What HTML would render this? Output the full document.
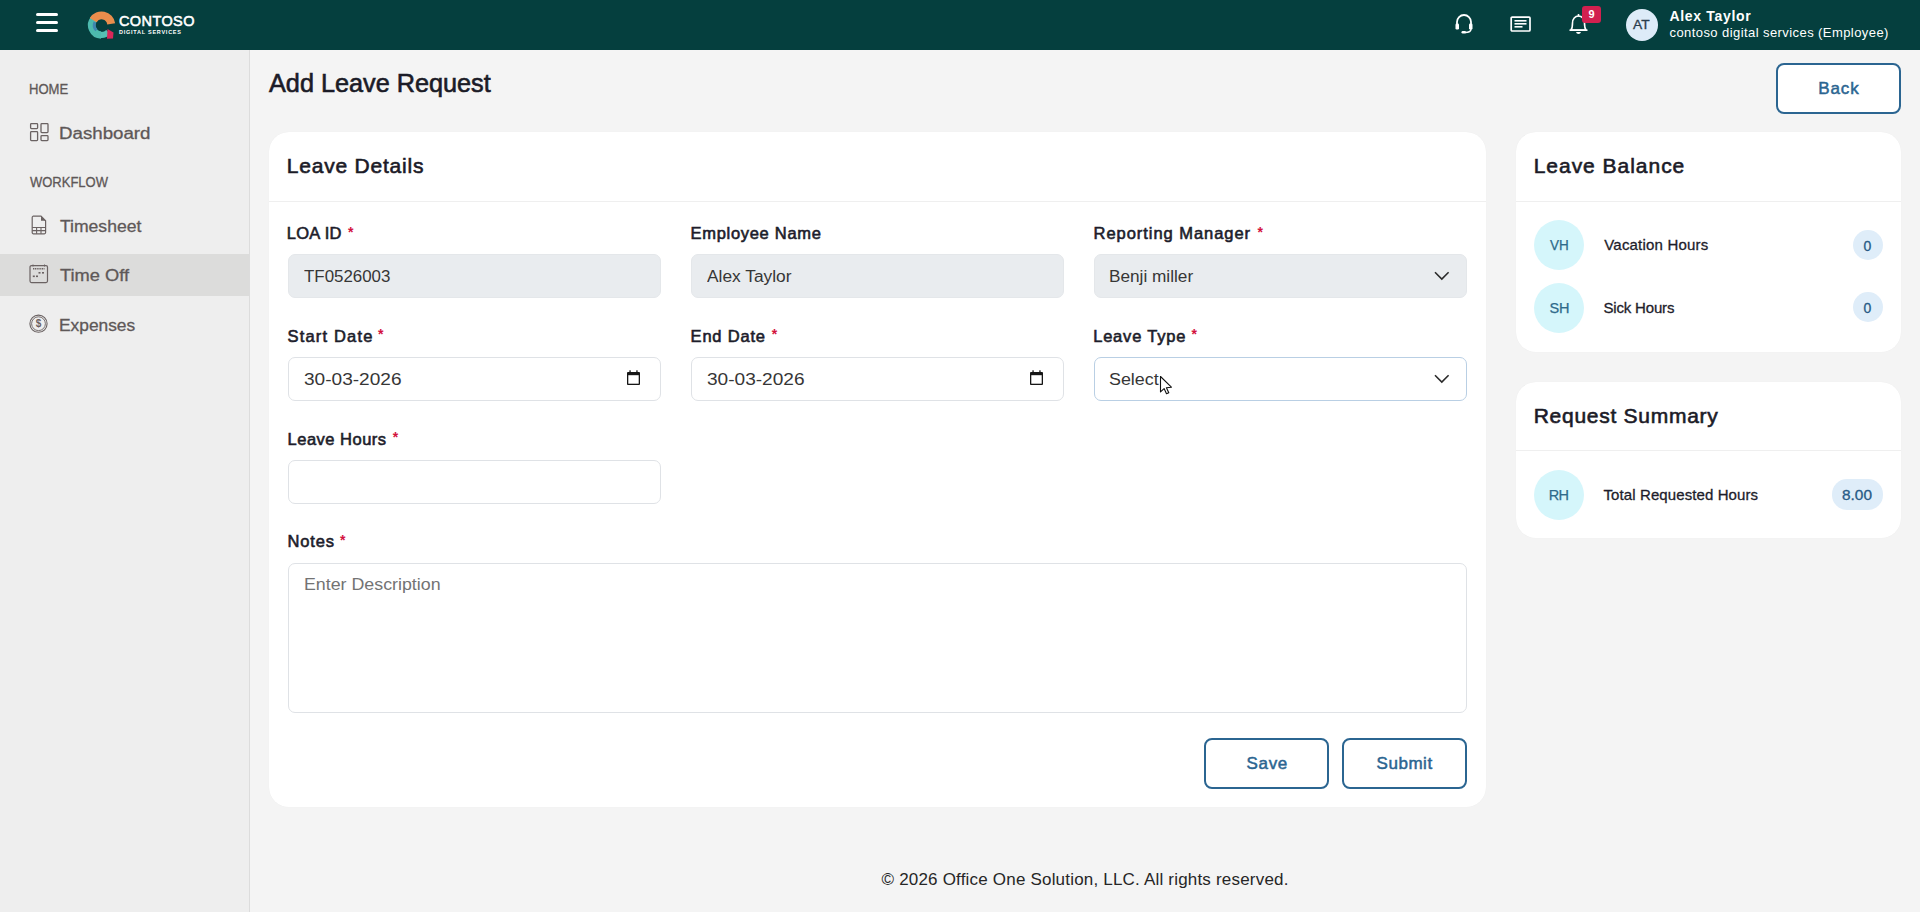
<!DOCTYPE html>
<html>
<head>
<meta charset="utf-8">
<style>
*{box-sizing:border-box;margin:0;padding:0}
html,body{width:1920px;height:912px;overflow:hidden;background:#f4f4f4;font-family:"Liberation Sans",sans-serif;position:relative}
.abs{position:absolute}
.t{position:absolute;white-space:nowrap;line-height:1;z-index:5}
#hdr{position:absolute;left:0;top:0;width:1920px;height:50px;background:#053f3e}
#side{position:absolute;left:0;top:50px;width:250px;height:862px;background:#eeeeee;border-right:1px solid #dcdcdc}
.card{position:absolute;background:#fff;border-radius:20px;box-shadow:0 0 1px rgba(0,0,0,0.06)}
.sep{position:absolute;left:0;right:0;height:1px;background:#efefef}
.inp{position:absolute;height:44px;width:373px;border:1px solid #dfe2e6;border-radius:7px;background:#fff}
.inp.dis{background:#e9ecef;border-color:#e4e7ea}
.btn{position:absolute;width:125px;height:51px;border:2px solid #2b6591;border-radius:8px;background:#fff}
.av{position:absolute;width:50px;height:50px;border-radius:50%;background:#d5f6fb}
.bdg{position:absolute;height:30px;border-radius:15px;background:#dfedf9}
.req{position:absolute;font-size:14px;font-weight:bold;color:#d3123e;line-height:1;z-index:5}
</style>
</head>
<body>
<!-- HEADER -->
<div id="hdr">
  <div class="abs" style="left:36px;top:13px;width:22px;height:3px;background:#fff;border-radius:2px"></div>
  <div class="abs" style="left:36px;top:21px;width:22px;height:3px;background:#fff;border-radius:2px"></div>
  <div class="abs" style="left:36px;top:29px;width:22px;height:3px;background:#fff;border-radius:2px"></div>
  <svg class="abs" style="left:87px;top:8px" width="30" height="33" viewBox="0 0 30 33">
    <path d="M14.16 26.99 A9.8 9.8 0 0 1 7.22 10.64" fill="none" stroke="#4dbaae" stroke-width="7.5"/>
    <path d="M9.41 22.29 A7.2 7.2 0 0 1 7.97 14.16" fill="none" stroke="#3f86b0" stroke-width="3"/>
    <path d="M6.19 12.01 A9.8 9.8 0 0 1 24.20 15.84" fill="none" stroke="#ea8d4c" stroke-width="8"/>
    <path d="M21.43 24.13 A9.8 9.8 0 0 1 13.65 26.96" fill="none" stroke="#56c0b4" stroke-width="6"/>
    <path d="M20.5 21 L26.5 24.5 L26 30.5 L20 30.8 Z" fill="#d8285a"/>
  </svg>
  <svg class="abs" style="left:1454px;top:13px" width="20" height="21" viewBox="0 0 20 21">
    <path d="M3 12 V9 A7 7 0 0 1 17 9 V12" fill="none" stroke="#fff" stroke-width="1.8"/>
    <rect x="1.5" y="10.5" width="3.5" height="6" rx="1.2" fill="#fff"/>
    <rect x="15" y="10.5" width="3.5" height="6" rx="1.2" fill="#fff"/>
    <path d="M17 16 C17 18.5 14 19.5 11 19.5" fill="none" stroke="#fff" stroke-width="1.5"/>
    <rect x="7.5" y="18" width="4.5" height="2.5" rx="1.2" fill="#fff"/>
  </svg>
  <svg class="abs" style="left:1510px;top:15px" width="22" height="18" viewBox="0 0 22 18">
    <rect x="1.2" y="2.1" width="18.8" height="13.9" rx="1" fill="none" stroke="#fff" stroke-width="1.7"/>
    <rect x="4.5" y="5" width="12" height="1.6" fill="#fff"/>
    <rect x="4.5" y="8" width="12" height="1.6" fill="#fff"/>
    <rect x="4.5" y="11" width="8" height="1.6" fill="#fff"/>
  </svg>
  <svg class="abs" style="left:1568px;top:13px" width="21" height="22" viewBox="0 0 21 22">
    <path d="M3 17 C4.5 15 4.5 13 4.5 10 C4.5 6 7 3 10.5 3 C14 3 16.5 6 16.5 10 C16.5 13 16.5 15 18 17 Z" fill="none" stroke="#fff" stroke-width="1.6" stroke-linejoin="round"/>
    <path d="M1.5 17.2 H19.5" stroke="#fff" stroke-width="1.6"/>
    <path d="M8 19 A2.6 2.6 0 0 0 13 19 Z" fill="#fff"/>
    <rect x="9.7" y="1" width="1.6" height="2.5" fill="#fff"/>
  </svg>
  <div class="abs" style="left:1582px;top:6px;width:19px;height:17px;background:#d1204f;border-radius:3px;color:#fff;font-size:11px;font-weight:bold;text-align:center;line-height:17px">9</div>
  <div class="abs" style="left:1625.5px;top:9px;width:32px;height:32px;border-radius:50%;background:#ddebf8"></div>
</div>

<!-- SIDEBAR -->
<div id="side">
  <svg class="abs" style="left:29px;top:72px" width="20" height="20" viewBox="0 0 20 20">
    <rect x="1.6" y="1.6" width="7" height="5" rx="0.8" fill="none" stroke="#6a6262" stroke-width="1.3"/>
    <rect x="1.6" y="9.6" width="7" height="9" rx="0.8" fill="none" stroke="#6a6262" stroke-width="1.3"/>
    <rect x="12" y="1.6" width="7" height="9" rx="0.8" fill="none" stroke="#6a6262" stroke-width="1.3"/>
    <rect x="12" y="13.6" width="7" height="5" rx="0.8" fill="none" stroke="#6a6262" stroke-width="1.3"/>
  </svg>
  <svg class="abs" style="left:31px;top:165px" width="16" height="20" viewBox="0 0 16 20">
    <path d="M2 1.2 H10 L14.6 5.8 V17.6 A1.2 1.2 0 0 1 13.4 18.8 H2.4 A1.2 1.2 0 0 1 1.2 17.6 V2.4 A1.2 1.2 0 0 1 2 1.2 Z" fill="none" stroke="#6a6262" stroke-width="1.2"/>
    <path d="M10 1.2 V5.8 H14.6" fill="#6a6262"/>
    <path d="M1.2 12.5 H14.6 M1.2 15.6 H14.6 M5.6 12.5 V18.8 M10 12.5 V18.8" stroke="#6a6262" stroke-width="1.1"/>
  </svg>
  <div class="abs" style="left:0;top:204px;width:249px;height:42px;background:#dcdcdb"></div>
  <svg class="abs" style="left:29px;top:214px" width="20" height="20" viewBox="0 0 20 20">
    <rect x="1" y="1.6" width="17.5" height="17" rx="1.5" fill="none" stroke="#6a6262" stroke-width="1.2"/>
    <path d="M4 4.8 H15.5" stroke="#6a6262" stroke-width="1.4" stroke-dasharray="1.2 0.6"/>
    <path d="M4 0.5 V2.5 M15.5 0.5 V2.5" stroke="#6a6262" stroke-width="1"/>
    <rect x="9.5" y="8" width="2" height="1.6" fill="#6a6262"/>
    <rect x="13" y="8" width="2" height="1.6" fill="#6a6262"/>
    <rect x="3.8" y="11.5" width="2" height="1.6" fill="#6a6262"/>
    <rect x="7" y="11.5" width="2" height="1.6" fill="#6a6262"/>
  </svg>
  <svg class="abs" style="left:29px;top:264px" width="20" height="20" viewBox="0 0 20 20">
    <circle cx="9.5" cy="9.7" r="8.6" fill="none" stroke="#6a6262" stroke-width="1.1"/>
    <circle cx="9.5" cy="9.7" r="6.9" fill="none" stroke="#6a6262" stroke-width="0.9"/>
    <text x="9.5" y="13.3" font-size="10" font-family="Liberation Sans" font-weight="bold" fill="#6a6262" text-anchor="middle">$</text>
  </svg>
</div>

<!-- MAIN -->
<div class="btn" style="left:1776px;top:63px"></div>

<div class="card" style="left:269px;top:132px;width:1217px;height:675px">
  <div class="sep" style="top:69px"></div>
</div>
<div class="card" style="left:1516px;top:132px;width:385px;height:220px">
  <div class="sep" style="top:69px"></div>
</div>
<div class="card" style="left:1516px;top:382px;width:385px;height:156px">
  <div class="sep" style="top:68px"></div>
</div>

<!-- FORM -->
<div class="inp dis" style="left:288px;top:254px"></div>
<div class="inp dis" style="left:691px;top:254px"></div>
<div class="inp dis" style="left:1094px;top:254px">
  <svg class="abs" style="left:338.5px;top:16px" width="16" height="10" viewBox="0 0 16 10"><path d="M1 1.2 L7.8 8 L14.6 1.2" fill="none" stroke="#2b2b2b" stroke-width="1.6"/></svg>
</div>
<div class="inp" style="left:288px;top:357px">
  <svg class="abs" style="left:338px;top:12px" width="14" height="16" viewBox="0 0 14 16"><rect x="0" y="2" width="13" height="13" rx="0.9" fill="#151515"/><rect x="1.3" y="5.2" width="10.4" height="8.5" fill="#fff"/><rect x="2.4" y="0.3" width="1.3" height="2.5" fill="#151515"/><rect x="9.3" y="0.3" width="1.3" height="2.5" fill="#151515"/></svg>
</div>
<div class="inp" style="left:691px;top:357px">
  <svg class="abs" style="left:338px;top:12px" width="14" height="16" viewBox="0 0 14 16"><rect x="0" y="2" width="13" height="13" rx="0.9" fill="#151515"/><rect x="1.3" y="5.2" width="10.4" height="8.5" fill="#fff"/><rect x="2.4" y="0.3" width="1.3" height="2.5" fill="#151515"/><rect x="9.3" y="0.3" width="1.3" height="2.5" fill="#151515"/></svg>
</div>
<div class="inp" style="left:1094px;top:357px;border-color:#b9cfe4">
  <svg class="abs" style="left:338.5px;top:16px" width="16" height="10" viewBox="0 0 16 10"><path d="M1 1.2 L7.8 8 L14.6 1.2" fill="none" stroke="#2b2b2b" stroke-width="1.6"/></svg>
</div>
<div class="inp" style="left:288px;top:460px"></div>
<div class="inp" style="left:288px;top:563px;width:1179px;height:150px"></div>

<div class="btn" style="left:1204px;top:738px"></div>
<div class="btn" style="left:1342px;top:738px"></div>

<div class="req" style="left:348px;top:224.5px">*</div>
<div class="req" style="left:1257.4px;top:224.5px">*</div>
<div class="req" style="left:378px;top:327.2px">*</div>
<div class="req" style="left:771.7px;top:327.2px">*</div>
<div class="req" style="left:1191.4px;top:327.2px">*</div>
<div class="req" style="left:392.8px;top:429.8px">*</div>
<div class="req" style="left:340px;top:533px">*</div>

<div class="av" style="left:1534px;top:220px"></div>
<div class="bdg" style="left:1853px;top:230px;width:30px"></div>
<div class="av" style="left:1534px;top:283px"></div>
<div class="bdg" style="left:1853px;top:292px;width:30px"></div>
<div class="av" style="left:1534px;top:470px"></div>
<div class="bdg" style="left:1832px;top:479px;width:51px;height:31px"></div>

<div class="t" id="addleave" style="left:268.50px;top:70.96px;font-size:25px;font-weight:normal;color:#1b1b27;letter-spacing:0.000px;-webkit-text-stroke:0.6px #1b1b27;transform:scaleX(1.0098);transform-origin:0 0">Add Leave Request</div>
<div class="t" id="ldetails" style="left:286.70px;top:154.83px;font-size:21px;font-weight:normal;color:#1b1b27;letter-spacing:0.800px;-webkit-text-stroke:0.6px #1b1b27">Leave Details</div>
<div class="t" id="lbal" style="left:1533.70px;top:155.35px;font-size:21px;font-weight:normal;color:#1b1b27;letter-spacing:0.973px;-webkit-text-stroke:0.6px #1b1b27">Leave Balance</div>
<div class="t" id="rsum" style="left:1533.70px;top:404.67px;font-size:21px;font-weight:normal;color:#1b1b27;letter-spacing:0.731px;-webkit-text-stroke:0.6px #1b1b27">Request Summary</div>
<div class="t" id="l_loa" style="left:286.70px;top:224.58px;font-size:16.5px;font-weight:normal;color:#1d1d2b;letter-spacing:0.320px;-webkit-text-stroke:0.6px #1d1d2b">LOA ID</div>
<div class="t" id="l_emp" style="left:690.58px;top:224.88px;font-size:16.5px;font-weight:normal;color:#1d1d2b;letter-spacing:0.693px;-webkit-text-stroke:0.6px #1d1d2b">Employee Name</div>
<div class="t" id="l_rep" style="left:1093.62px;top:224.68px;font-size:16.5px;font-weight:normal;color:#1d1d2b;letter-spacing:0.950px;-webkit-text-stroke:0.6px #1d1d2b">Reporting Manager</div>
<div class="t" id="l_start" style="left:287.54px;top:328.36px;font-size:16.5px;font-weight:normal;color:#1d1d2b;letter-spacing:1.173px;-webkit-text-stroke:0.6px #1d1d2b">Start Date</div>
<div class="t" id="l_end" style="left:690.58px;top:328.22px;font-size:16.5px;font-weight:normal;color:#1d1d2b;letter-spacing:0.800px;-webkit-text-stroke:0.6px #1d1d2b">End Date</div>
<div class="t" id="l_type" style="left:1093.16px;top:328.20px;font-size:16.5px;font-weight:normal;color:#1d1d2b;letter-spacing:0.800px;-webkit-text-stroke:0.6px #1d1d2b">Leave Type</div>
<div class="t" id="l_hours" style="left:287.54px;top:430.98px;font-size:16.5px;font-weight:normal;color:#1d1d2b;letter-spacing:0.496px;-webkit-text-stroke:0.6px #1d1d2b">Leave Hours</div>
<div class="t" id="l_notes" style="left:287.62px;top:533.46px;font-size:16.5px;font-weight:normal;color:#1d1d2b;letter-spacing:0.800px;-webkit-text-stroke:0.6px #1d1d2b">Notes</div>
<div class="t" id="i_tf" style="left:303.50px;top:268.66px;font-size:16px;font-weight:normal;color:#363636;letter-spacing:0.000px;transform:scaleX(1.0556);transform-origin:0 0">TF0526003</div>
<div class="t" id="i_alex" style="left:707.38px;top:268.82px;font-size:16px;font-weight:normal;color:#363636;letter-spacing:0.000px;transform:scaleX(1.0832);transform-origin:0 0">Alex Taylor</div>
<div class="t" id="i_benji" style="left:1109.20px;top:268.94px;font-size:16px;font-weight:normal;color:#363636;letter-spacing:0.000px;transform:scaleX(1.0749);transform-origin:0 0">Benji miller</div>
<div class="t" id="i_d1" style="left:303.58px;top:372.24px;font-size:16px;font-weight:normal;color:#363636;letter-spacing:0.000px;transform:scaleX(1.1915);transform-origin:0 0">30-03-2026</div>
<div class="t" id="i_d2" style="left:706.58px;top:372.24px;font-size:16px;font-weight:normal;color:#363636;letter-spacing:0.000px;transform:scaleX(1.1915);transform-origin:0 0">30-03-2026</div>
<div class="t" id="i_sel" style="left:1109.16px;top:371.98px;font-size:16px;font-weight:normal;color:#363636;letter-spacing:0.000px;transform:scaleX(1.1174);transform-origin:0 0">Select</div>
<div class="t" id="i_desc" style="left:303.58px;top:576.90px;font-size:16px;font-weight:normal;color:#737373;letter-spacing:0.000px;transform:scaleX(1.1125);transform-origin:0 0">Enter Description</div>
<div class="t" id="b_save" style="left:1246.58px;top:755.27px;font-size:17px;font-weight:normal;color:#2b6591;letter-spacing:0.640px;-webkit-text-stroke:0.5px #2b6591">Save</div>
<div class="t" id="b_sub" style="left:1376.54px;top:755.27px;font-size:17px;font-weight:normal;color:#2b6591;letter-spacing:0.544px;-webkit-text-stroke:0.5px #2b6591">Submit</div>
<div class="t" id="b_back" style="left:1818.24px;top:80.27px;font-size:17px;font-weight:normal;color:#2b6591;letter-spacing:0.907px;-webkit-text-stroke:0.5px #2b6591">Back</div>
<div class="t" id="r_vac" style="left:1604.30px;top:236.62px;font-size:15px;font-weight:normal;color:#1d1d2b;letter-spacing:0.185px;-webkit-text-stroke:0.3px #1d1d2b">Vacation Hours</div>
<div class="t" id="r_sick" style="left:1603.50px;top:299.74px;font-size:15px;font-weight:normal;color:#1d1d2b;letter-spacing:-0.178px;-webkit-text-stroke:0.3px #1d1d2b">Sick Hours</div>
<div class="t" id="r_tot" style="left:1603.52px;top:487.30px;font-size:15px;font-weight:normal;color:#1d1d2b;letter-spacing:0.100px;-webkit-text-stroke:0.3px #1d1d2b">Total Requested Hours</div>
<div class="t" id="a_vh" style="left:1550.30px;top:238.30px;font-size:14.5px;font-weight:normal;color:#2f6b8b;letter-spacing:0.000px;-webkit-text-stroke:0.25px #2f6b8b;transform:scaleX(0.9300);transform-origin:0 0">VH</div>
<div class="t" id="a_sh" style="left:1549.60px;top:300.90px;font-size:14.5px;font-weight:normal;color:#2f6b8b;letter-spacing:-0.320px;-webkit-text-stroke:0.25px #2f6b8b">SH</div>
<div class="t" id="a_rh" style="left:1548.70px;top:488.18px;font-size:14.5px;font-weight:normal;color:#2f6b8b;letter-spacing:-0.720px;-webkit-text-stroke:0.25px #2f6b8b">RH</div>
<div class="t" id="g_0a" style="left:1863.40px;top:238.74px;font-size:14px;font-weight:normal;color:#285b86;letter-spacing:0.000px;-webkit-text-stroke:0.3px #285b86">0</div>
<div class="t" id="g_0b" style="left:1863.40px;top:300.58px;font-size:14px;font-weight:normal;color:#285b86;letter-spacing:0.000px;-webkit-text-stroke:0.3px #285b86">0</div>
<div class="t" id="g_8" style="left:1841.50px;top:487.74px;font-size:14px;font-weight:normal;color:#285b86;letter-spacing:0.000px;-webkit-text-stroke:0.3px #285b86;transform:scaleX(1.1000);transform-origin:0 0">8.00</div>
<div class="t" id="h_name" style="left:1669.50px;top:8.70px;font-size:14px;font-weight:bold;color:#ffffff;letter-spacing:0.672px">Alex Taylor</div>
<div class="t" id="h_sub" style="left:1669.50px;top:25.62px;font-size:13px;font-weight:normal;color:#ffffff;letter-spacing:0.424px">contoso digital services (Employee)</div>
<div class="t" id="h_cont" style="left:119.00px;top:14.46px;font-size:14.5px;font-weight:normal;color:#ffffff;letter-spacing:0.400px;-webkit-text-stroke:0.55px #ffffff">CONTOSO</div>
<div class="t" id="h_dig" style="left:119.00px;top:29.97px;font-size:5.5px;font-weight:bold;color:#ffffff;letter-spacing:0.747px">DIGITAL SERVICES</div>
<div class="t" id="h_at" style="left:1633.30px;top:17.74px;font-size:13px;font-weight:normal;color:#2a3d4d;letter-spacing:0.000px;-webkit-text-stroke:0.3px #2a3d4d;transform:scaleX(1.0599);transform-origin:0 0">AT</div>
<div class="t" id="s_home" style="left:29.26px;top:81.94px;font-size:14px;font-weight:normal;color:#5e5858;letter-spacing:0.000px;-webkit-text-stroke:0.3px #5e5858;transform:scaleX(0.9341);transform-origin:0 0">HOME</div>
<div class="t" id="s_dash" style="left:59.20px;top:125.90px;font-size:16px;font-weight:normal;color:#5e5858;letter-spacing:0.000px;-webkit-text-stroke:0.3px #5e5858;transform:scaleX(1.1684);transform-origin:0 0">Dashboard</div>
<div class="t" id="s_work" style="left:30.06px;top:175.10px;font-size:14px;font-weight:normal;color:#5e5858;letter-spacing:0.000px;-webkit-text-stroke:0.3px #5e5858;transform:scaleX(0.9282);transform-origin:0 0">WORKFLOW</div>
<div class="t" id="s_time" style="left:60.06px;top:218.66px;font-size:16px;font-weight:normal;color:#5e5858;letter-spacing:0.000px;-webkit-text-stroke:0.3px #5e5858;transform:scaleX(1.0973);transform-origin:0 0">Timesheet</div>
<div class="t" id="s_off" style="left:60.24px;top:267.90px;font-size:16px;font-weight:normal;color:#5e5858;letter-spacing:0.000px;-webkit-text-stroke:0.3px #5e5858;transform:scaleX(1.1411);transform-origin:0 0">Time Off</div>
<div class="t" id="s_exp" style="left:59.44px;top:318.06px;font-size:16px;font-weight:normal;color:#5e5858;letter-spacing:0.000px;-webkit-text-stroke:0.3px #5e5858;transform:scaleX(1.0836);transform-origin:0 0">Expenses</div>
<div class="t" id="footer" style="left:881.50px;top:870.69px;font-size:17px;font-weight:normal;color:#262626;letter-spacing:0.194px">© 2026 Office One Solution, LLC. All rights reserved.</div>
<svg class="abs" style="left:1159px;top:375px;z-index:9" width="15" height="21" viewBox="0 0 15 21"><path d="M1.5 1.5 V16.9 L5.1 13.6 L7.5 18.8 L9.8 17.8 L7.4 12.7 L12.4 12.2 Z" fill="#fff" stroke="#111" stroke-width="1.1" stroke-linejoin="round"/></svg>

</body>
</html>
